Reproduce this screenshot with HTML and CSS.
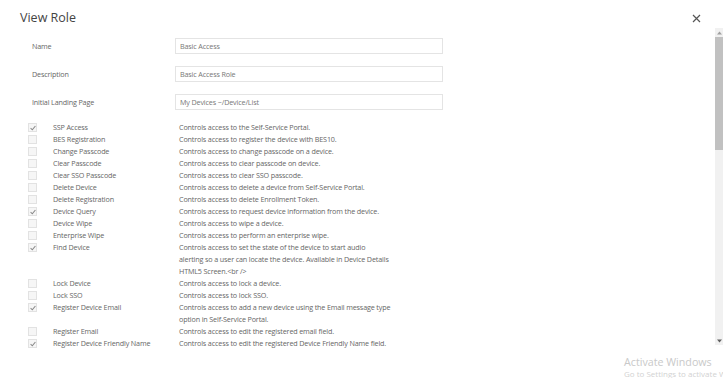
FILE: index.html
```html
<!DOCTYPE html>
<html lang="en">
<head>
  <meta charset="UTF-8">
  <title>View Role</title>
  <link rel="stylesheet" href="styles.css">
</head>
<body>

  <div class="modal">
    <div class="modal-header">
      <h2 class="modal-title">View Role</h2>
      <button class="close-btn" aria-label="Close">
        <svg width="9" height="9" viewBox="0 0 9 9">
          <path d="M1 1 L8 8 M8 1 L1 8" stroke="#555" stroke-width="1.2" fill="none"/>
        </svg>
      </button>
    </div>

    <div class="modal-body">
      <div class="content">
        <div class="form-row">
          <label>Name</label>
          <div class="field">Basic Access</div>
        </div>
        <div class="form-row">
          <label>Description</label>
          <div class="field">Basic Access Role</div>
        </div>
        <div class="form-row">
          <label>Initial Landing Page</label>
          <div class="field">My Devices ~/Device/List</div>
        </div>

        <div class="perm-list">
          <div class="perm-row">
            <span class="check checked"><svg width="8" height="8" viewBox="0 0 8 8"><path d="M1.6 4.2 L3.3 5.8 L6.4 2" stroke="#8a8a8a" stroke-width="1.1" fill="none"/></svg></span>
            <span class="perm-name">SSP Access</span>
            <span class="perm-desc">Controls access to the Self-Service Portal.</span>
          </div>
          <div class="perm-row">
            <span class="check"></span>
            <span class="perm-name">BES Registration</span>
            <span class="perm-desc">Controls access to register the device with BES10.</span>
          </div>
          <div class="perm-row">
            <span class="check"></span>
            <span class="perm-name">Change Passcode</span>
            <span class="perm-desc">Controls access to change passcode on a device.</span>
          </div>
          <div class="perm-row">
            <span class="check"></span>
            <span class="perm-name">Clear Passcode</span>
            <span class="perm-desc">Controls access to clear passcode on device.</span>
          </div>
          <div class="perm-row">
            <span class="check"></span>
            <span class="perm-name">Clear SSO Passcode</span>
            <span class="perm-desc">Controls access to clear SSO passcode.</span>
          </div>
          <div class="perm-row">
            <span class="check"></span>
            <span class="perm-name">Delete Device</span>
            <span class="perm-desc">Controls access to delete a device from Self-Service Portal.</span>
          </div>
          <div class="perm-row">
            <span class="check"></span>
            <span class="perm-name">Delete Registration</span>
            <span class="perm-desc">Controls access to delete Enrollment Token.</span>
          </div>
          <div class="perm-row">
            <span class="check checked"><svg width="8" height="8" viewBox="0 0 8 8"><path d="M1.6 4.2 L3.3 5.8 L6.4 2" stroke="#8a8a8a" stroke-width="1.1" fill="none"/></svg></span>
            <span class="perm-name">Device Query</span>
            <span class="perm-desc">Controls access to request device information from the device.</span>
          </div>
          <div class="perm-row">
            <span class="check"></span>
            <span class="perm-name">Device Wipe</span>
            <span class="perm-desc">Controls access to wipe a device.</span>
          </div>
          <div class="perm-row">
            <span class="check"></span>
            <span class="perm-name">Enterprise Wipe</span>
            <span class="perm-desc">Controls access to perform an enterprise wipe.</span>
          </div>
          <div class="perm-row">
            <span class="check checked"><svg width="8" height="8" viewBox="0 0 8 8"><path d="M1.6 4.2 L3.3 5.8 L6.4 2" stroke="#8a8a8a" stroke-width="1.1" fill="none"/></svg></span>
            <span class="perm-name">Find Device</span>
            <span class="perm-desc">Controls access to set the state of the device to start audio<br>alerting so a user can locate the device. Available in Device Details<br>HTML5 Screen.&lt;br /&gt;</span>
          </div>
          <div class="perm-row">
            <span class="check"></span>
            <span class="perm-name">Lock Device</span>
            <span class="perm-desc">Controls access to lock a device.</span>
          </div>
          <div class="perm-row">
            <span class="check"></span>
            <span class="perm-name">Lock SSO</span>
            <span class="perm-desc">Controls access to lock SSO.</span>
          </div>
          <div class="perm-row">
            <span class="check checked"><svg width="8" height="8" viewBox="0 0 8 8"><path d="M1.6 4.2 L3.3 5.8 L6.4 2" stroke="#8a8a8a" stroke-width="1.1" fill="none"/></svg></span>
            <span class="perm-name">Register Device Email</span>
            <span class="perm-desc">Controls access to add a new device using the Email message type<br>option in Self-Service Portal.</span>
          </div>
          <div class="perm-row">
            <span class="check"></span>
            <span class="perm-name">Register Email</span>
            <span class="perm-desc">Controls access to edit the registered email field.</span>
          </div>
          <div class="perm-row">
            <span class="check checked"><svg width="8" height="8" viewBox="0 0 8 8"><path d="M1.6 4.2 L3.3 5.8 L6.4 2" stroke="#8a8a8a" stroke-width="1.1" fill="none"/></svg></span>
            <span class="perm-name">Register Device Friendly Name</span>
            <span class="perm-desc">Controls access to edit the registered Device Friendly Name field.</span>
          </div>
          <div class="perm-row">
            <span class="check"></span>
            <span class="perm-name">Unlock Device</span>
            <span class="perm-desc">Controls access to unlock a device.</span>
          </div>
        </div>
      </div>

      <div class="scrollbar">
        <div class="sb-arrow"><svg width="5" height="4" viewBox="0 0 5 4"><path d="M0 3.5 L2.5 0.5 L5 3.5 Z" fill="#a0a0a0"/></svg></div>
        <div class="sb-track">
          <div class="sb-thumb"></div>
        </div>
        <div class="sb-arrow"><svg width="5" height="4" viewBox="0 0 5 4"><path d="M0 0.5 L2.5 3.5 L5 0.5 Z" fill="#606060"/></svg></div>
      </div>
    </div>
  </div>

  <div class="watermark">
    <div class="wm-title">Activate Windows</div>
    <div class="wm-sub">Go to Settings to activate Windows.</div>
  </div>

</body>
</html>
```

FILE: styles.css
```css
body {
  font-family: "Open Sans", "Noto Sans", sans-serif;
  background: #fff;
  margin: 0;
  width: 723px;
  height: 378px;
  overflow: hidden;
  position: relative;
  color: #666;
}

.modal {
  display: flex;
  flex-direction: column;
}

.modal-header {
  display: flex;
  justify-content: space-between;
  align-items: flex-start;
  height: 28px;
  padding: 0 22px 0 20px;
}

.modal-title {
  margin: 10px 0 0;
  font-size: 12.5px;
  line-height: 16px;
  font-weight: normal;
  color: #444;
}

.close-btn {
  margin-top: 14px;
  padding: 0;
  border: none;
  background: none;
  width: 9px;
  height: 9px;
  display: flex;
}

.modal-body {
  display: flex;
  height: 320px;
}

.content {
  flex: 1;
  overflow: hidden;
  padding-top: 10px;
  font-size: 7.2px;
  letter-spacing: -0.15px;
}

.form-row {
  display: flex;
  align-items: center;
  height: 16px;
  margin-bottom: 12px;
  padding-left: 32px;
}

.form-row label {
  width: 143px;
}

.field {
  width: 262px;
  height: 14px;
  line-height: 14px;
  padding-left: 4px;
  border: 1px solid #e4e4e4;
  color: #777;
}

.perm-list {
  margin-top: -1px;
}

.perm-row {
  display: grid;
  grid-template-columns: 25px 126px 280px;
  padding-left: 28px;
  line-height: 12px;
}

.check {
  width: 7px;
  height: 7px;
  margin-top: 2px;
  border: 1px solid #e2e2e2;
  background: #f6f6f6;
  display: flex;
  align-items: center;
  justify-content: center;
}

.check svg {
  flex-shrink: 0;
}

.perm-desc {
  color: #666;
  letter-spacing: -0.15px;
}

.scrollbar {
  width: 8px;
  height: 317px;
  display: flex;
  flex-direction: column;
  background: #f1f1f1;
}

.sb-arrow {
  height: 9px;
  display: flex;
  align-items: center;
  justify-content: center;
}

.sb-track {
  flex: 1;
}

.sb-thumb {
  height: 113px;
  background: #c1c1c1;
}

.watermark {
  position: absolute;
  left: 624px;
  top: 356px;
  white-space: nowrap;
  color: #c9c9c9;
}

.wm-title {
  font-size: 10.7px;
  line-height: 13px;
}

.wm-sub {
  font-size: 8px;
  line-height: 10px;
  color: #d2d2d2;
}
```
